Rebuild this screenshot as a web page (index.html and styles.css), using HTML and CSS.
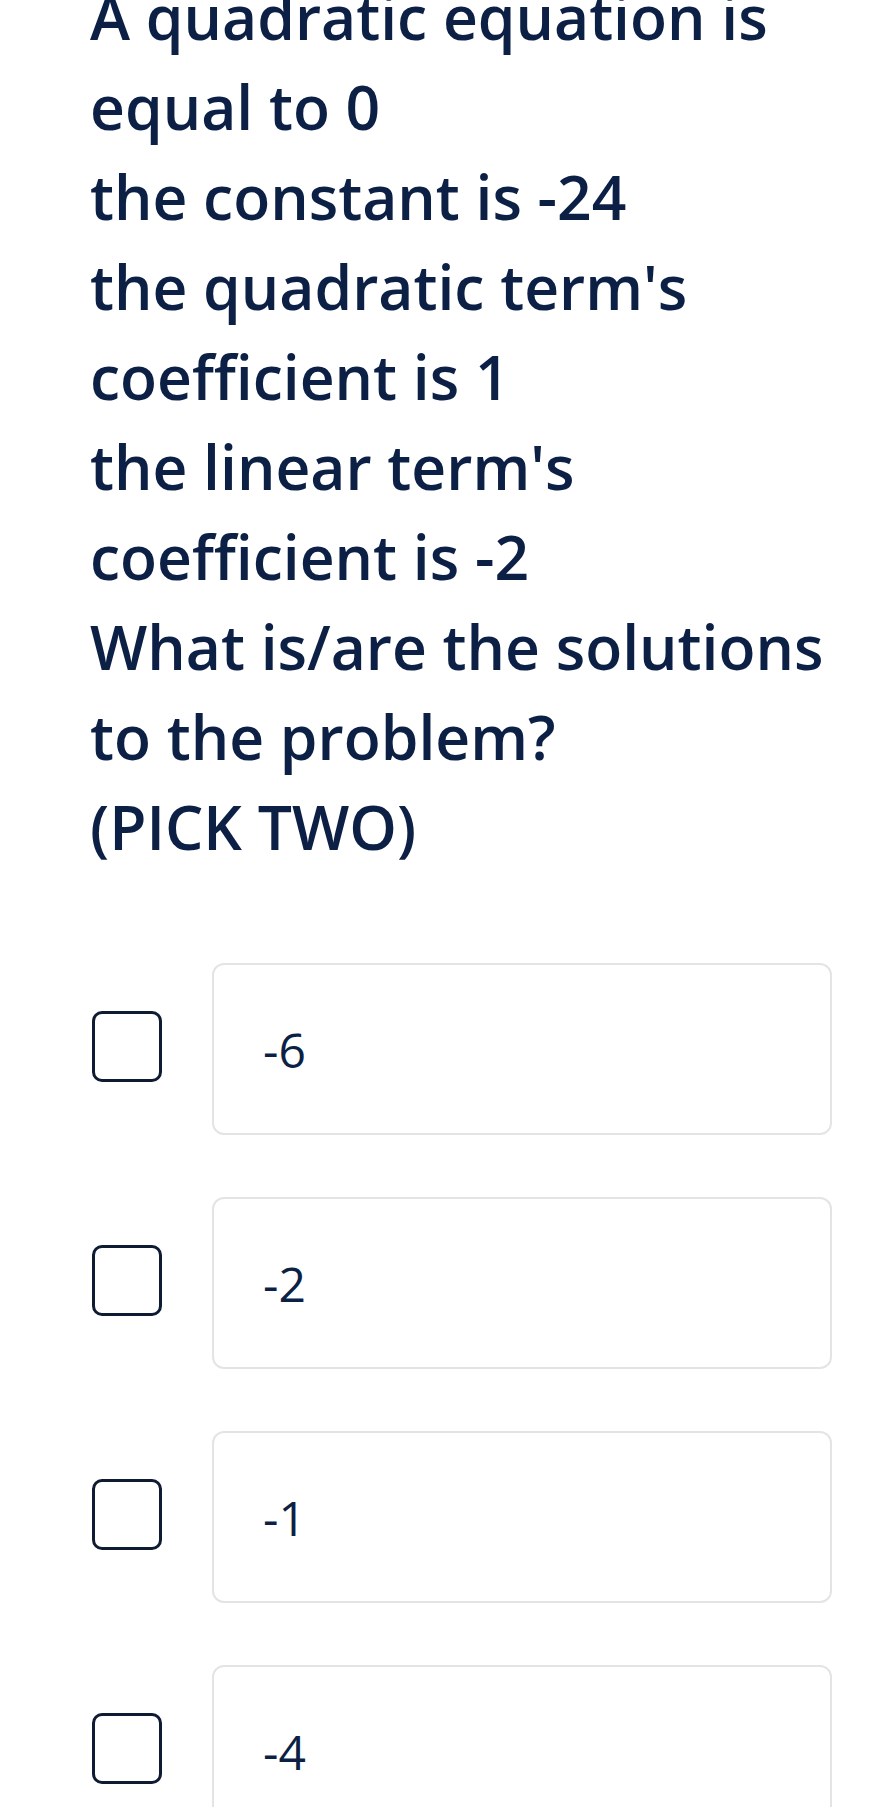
FILE: index.html
```html
<!DOCTYPE html>
<html lang="en">
<head>
<meta charset="utf-8">
<title>Quadratic question</title>
<link rel="stylesheet" href="styles.css">
</head>
<body>
<main class="page">
  <div class="question">
    <p class="line">A quadratic equation is</p>
    <p class="line">equal to 0</p>
    <p class="line">the constant is -24</p>
    <p class="line">the quadratic term's</p>
    <p class="line">coefficient is 1</p>
    <p class="line">the linear term's</p>
    <p class="line">coefficient is -2</p>
    <p class="line">What is/are the solutions</p>
    <p class="line">to the problem?</p>
    <p class="line">(PICK TWO)</p>
  </div>
  <ul class="options">
    <li class="option"><span class="check"></span><div class="card">-6</div></li>
    <li class="option"><span class="check"></span><div class="card">-2</div></li>
    <li class="option"><span class="check"></span><div class="card">-1</div></li>
    <li class="option"><span class="check"></span><div class="card">-4</div></li>
  </ul>
</main>
</body>
</html>
```
FILE: styles.css
```css
html, body {
  margin: 0;
  padding: 0;
  background: #ffffff;
}
body {
  font-family: "Open Sans", "Noto Sans", sans-serif;
  color: #0c1f45;
  overflow: hidden;
}
.page {
  display: flex;
  flex-direction: column;
}
.question {
  margin-top: -28px;
  padding-left: 90px;
}
.line {
  margin: 0;
  font-size: 60.6px;
  font-weight: 600;
  line-height: 90px;
  white-space: nowrap;
}
.options {
  list-style: none;
  margin: 91px 0 0 0;
  padding: 0 38px 0 92px;
  display: flex;
  flex-direction: column;
  gap: 62px;
}
.option {
  display: flex;
  align-items: center;
  gap: 50px;
}
.check {
  flex: 0 0 auto;
  width: 70px;
  height: 71px;
  margin-bottom: 5px;
  box-sizing: border-box;
  border: 3.5px solid #0f1a33;
  border-radius: 10px;
}
.card {
  flex: 1 1 auto;
  height: 172px;
  box-sizing: border-box;
  border: 2px solid #e4e4e6;
  border-radius: 12px;
  padding-left: 49px;
  display: flex;
  align-items: center;
  font-size: 48px;
  font-weight: 400;
  color: #0c1f45;
}
```
